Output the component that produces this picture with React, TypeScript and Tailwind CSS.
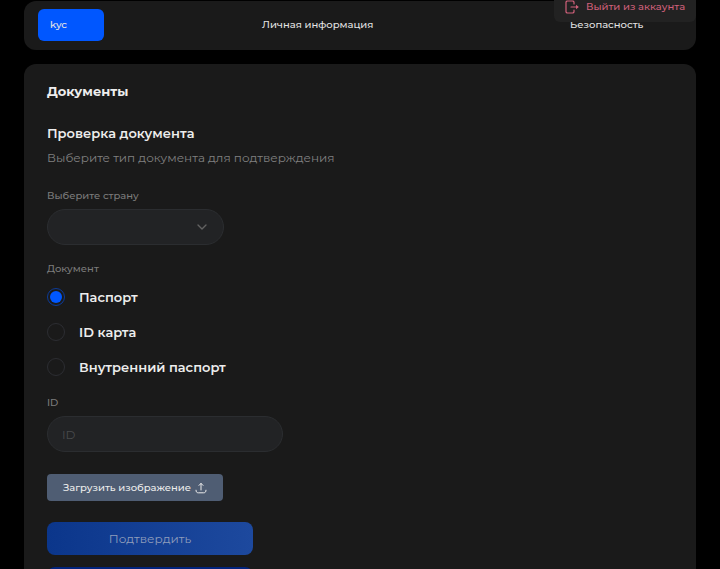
import React, { useState } from 'react';
import { ChevronDown } from 'lucide-react';

interface Tab {
    id: string;
    title: string;
}

interface DocumentType {
    id: string;
    title: string;
}

const tabs: Tab[] = [
    { id: 'kyc', title: 'kyc' },
    { id: 'personal', title: 'Личная информация' },
    { id: 'security', title: 'Безопасность' }
];

const documentTypes: DocumentType[] = [
    { id: 'passport', title: 'Паспорт' },
    { id: 'id-card', title: 'ID карта' },
    { id: 'internal', title: 'Внутренний паспорт' }
];

const LogoutIcon: React.FC = () => (
    <svg width="14" height="14" viewBox="0 0 14 14" fill="none" stroke="currentColor" strokeWidth="1.2" strokeLinecap="round" strokeLinejoin="round" aria-hidden="true">
        <path d="M9 4V2L8 1H2L1 2v10l1 1h6l1-1v-2" />
        <path d="M6 7h6" />
        <path d="M11 4.800L13.800 7 11 9.200z" fill="currentColor" stroke="none" />
    </svg>
);

const UploadIcon: React.FC = () => (
    <svg width="12" height="12" viewBox="0 0 12 12" fill="none" stroke="currentColor" strokeLinecap="round" strokeLinejoin="round" aria-hidden="true">
        <path d="M6 8V1.500M4 3.400l2-2 2 2" />
        <path d="M1 8.200c0 1.800.8 2.600 2.400 2.600h5.200c1.600 0 2.400-.8 2.400-2.600" />
    </svg>
);

const Navigation: React.FC = () => {
    const [active, setActive] = useState('kyc');

    return (
        <nav className="grid grid-cols-[212fr_308fr_124fr] justify-items-start rounded-xl bg-[#1a1a1a] px-[14px] pb-[9px] pt-2">
            {tabs.map((tab) => (
                <button
                    key={tab.id}
                    type="button"
                    onClick={() => setActive(tab.id)}
                    className={`h-8 min-w-[66px] whitespace-nowrap rounded-md px-3 text-left text-[10px] font-medium leading-4 text-[#e4e4e4] ${active === tab.id ? 'bg-[#0057ff]' : ''}`}
                >
                    {tab.title}
                </button>
            ))}
        </nav>
    );
};

const DocumentForm: React.FC = () => {
    const [documentType, setDocumentType] = useState('passport');

    return (
        <form className="flex flex-col items-start" onSubmit={(e) => e.preventDefault()}>
            <label htmlFor="country" className="mt-5 text-[10px] font-medium leading-4 text-[#7c7c7c]">Выберите страну</label>
            <div className="relative mt-[5px] w-[177px]">
                <select
                    id="country"
                    defaultValue=""
                    className="h-9 w-full appearance-none rounded-full border border-[#2b2d30] bg-[#222325] px-4 text-[12px] text-[#e4e4e4] outline-none"
                >
                    <option value=""></option>
                </select>
                <ChevronDown size={16} className="pointer-events-none absolute right-[14px] top-[10px] text-[#626262]" />
            </div>

            <fieldset className="mt-4">
                <legend className="text-[10px] font-medium leading-4 text-[#7c7c7c]">Документ</legend>
                <div className="mt-[10px] flex flex-col gap-[15px]">
                    {documentTypes.map((type) => (
                        <label key={type.id} className="flex items-center gap-[14px] text-[13px] font-semibold leading-5 text-[#ededed]">
                            <input
                                type="radio"
                                name="document"
                                value={type.id}
                                checked={documentType === type.id}
                                onChange={() => setDocumentType(type.id)}
                                className="grid size-[18px] appearance-none place-items-center rounded-full border border-[#2c2d32] before:size-3 before:rounded-full checked:border-[#0c3a98] checked:before:bg-[#0057ff]"
                            />
                            {type.title}
                        </label>
                    ))}
                </div>
            </fieldset>

            <label htmlFor="document-id" className="mt-[18px] text-[10px] font-medium leading-4 text-[#7c7c7c]">ID</label>
            <input
                id="document-id"
                type="text"
                placeholder="ID"
                className="mt-[5px] h-9 w-[236px] rounded-full border border-[#2b2d30] bg-[#222325] px-[14px] text-[12px] text-[#e4e4e4] outline-none placeholder:text-[#484a4c]"
            />

            <button type="button" className="mt-[22px] flex h-[27px] w-44 items-center justify-center gap-1 whitespace-nowrap rounded bg-[#4f5d73] text-[10px] font-medium leading-4 text-[#ededed]">
                Загрузить изображение
                <UploadIcon />
            </button>

            <button type="submit" className="mt-[21px] h-[33px] w-[206px] rounded-lg bg-linear-to-r from-[#0b368b] to-[#1d499e] text-[12px] leading-5 text-[#8f9dbb]">
                Подтвердить
            </button>
            <button type="button" aria-label="Продолжить" className="mt-3 h-[33px] w-[206px] rounded-lg bg-[#02237c]" />
        </form>
    );
};

export default function App() {
    return (
        <div className="relative h-screen overflow-hidden bg-black px-6 pt-px font-['Montserrat','Inter',sans-serif]">
            <Navigation />

            <main className="mt-[14px] rounded-xl bg-[#1a1a1a] px-[23px] pb-8 pt-[17px]">
                <h1 className="text-[13px] font-bold leading-5 text-[#ededed]">Документы</h1>
                <h2 className="mt-[22px] text-[13px] font-semibold leading-5 text-[#ededed]">Проверка документа</h2>
                <p className="mt-[5px] text-[12px] leading-5 text-[#808080]">Выберите тип документа для подтверждения</p>
                <DocumentForm />
            </main>

            {/* Account menu, hangs over the navigation */}
            <button
                type="button"
                className="absolute -top-2 right-6 flex h-[30px] w-[142px] items-center justify-center gap-[7px] whitespace-nowrap rounded-md bg-[#222222] text-[10px] font-medium leading-4 text-[#d0607a]"
            >
                <LogoutIcon />
                Выйти из аккаунта
            </button>
        </div>
    );
}
